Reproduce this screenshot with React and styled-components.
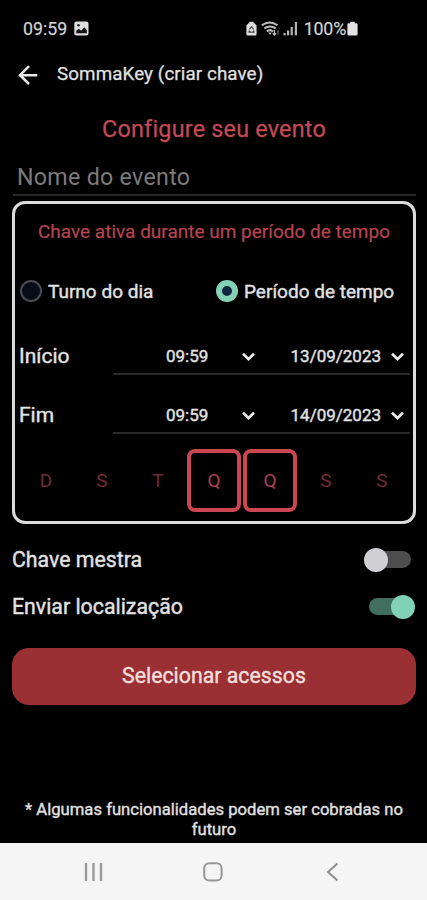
import React, { useState } from 'react'
import styled, { createGlobalStyle } from 'styled-components'

const GlobalStyle = createGlobalStyle`
    * {
        box-sizing: border-box;
    }

    body {
        margin: 0;
        background: #000;
        font-family: Roboto, 'Liberation Sans', sans-serif;
        color: #e2e2e2;
    }

    button, input {
        font-family: inherit;
        color: inherit;
        background: none;
        border: 0;
        padding: 0;
        margin: 0;
    }
`;

const Screen = styled.div`
    width: 427px;
    height: 900px;
    display: flex;
    flex-direction: column;
    background: #000;
    overflow: hidden;
`;

const StatusBar = styled.div`
    height: 50px;
    padding: 7px 69px 0 23px;
    display: flex;
    align-items: center;
    flex-shrink: 0;
    color: #d2d2d2;
    font-size: 17.8px;
    -webkit-text-stroke: 0.2px;

    svg {
        display: block;
        flex-shrink: 0;
    }
`;

const Clock = styled.span`
    margin-right: 7px;
`;

const StatusIcons = styled.div`
    margin-left: auto;
    display: flex;
    align-items: center;
`;

const Saver = styled.span`
    margin-right: 4px;
`;

const Wifi = styled.span`
    margin-right: 3px;
`;

const Battery = styled.span`
    margin: 0 1px 0 6px;
    letter-spacing: -0.2px;
`;

const Header = styled.header`
    height: 48px;
    padding-left: 18px;
    display: flex;
    align-items: center;
    flex-shrink: 0;
`;

const BackButton = styled.button`
    width: 39px;
    height: 24px;
    padding-top: 2px;
    display: flex;
    align-items: center;
`;

const HeaderTitle = styled.span`
    font-size: 18.8px;
    line-height: 24px;
    letter-spacing: 0.1px;
    -webkit-text-stroke: 0.25px;
`;

const Content = styled.main`
    flex: 1;
    padding: 0 11px 0 12px;
    display: flex;
    flex-direction: column;
`;

const Title = styled.h1`
    margin: 16px 0 0;
    height: 30px;
    line-height: 30px;
    font-size: 23.4px;
    font-weight: 400;
    letter-spacing: 0.2px;
    text-align: center;
    color: #c34a56;
    -webkit-text-stroke: 0.25px;
`;

const NameInput = styled.input`
    height: 39px;
    margin: 13px 0 5px 1px;
    padding: 2px 4px 0;
    border-bottom: 2px solid #262626;
    font-size: 23.2px;
    letter-spacing: 0.3px;
    outline: none;

    &::placeholder {
        color: #7b7b7b;
        opacity: 1;
    }
`;

const Card = styled.section`
    height: 323px;
    border: 3px solid #dcdcdc;
    border-radius: 13px;
    display: flex;
    flex-direction: column;
`;

const CardTitle = styled.h2`
    margin: 15px 0 0;
    height: 26px;
    line-height: 26px;
    font-size: 19px;
    font-weight: 400;
    text-align: center;
    color: #b84350;
    -webkit-text-stroke: 0.2px;
`;

const RadioGroup = styled.div`
    height: 28px;
    margin-top: 32px;
    padding-left: 5px;
    display: grid;
    grid-template-columns: 196px 1fr;
`;

const RadioLabel = styled.button`
    display: flex;
    align-items: center;
    gap: 6px;
    font-size: 19px;
    -webkit-text-stroke: 0.4px;
    white-space: nowrap;
`;

const RadioMark = styled.span`
    width: 22px;
    height: 22px;
    flex-shrink: 0;
    border-radius: 50%;
    background: ${({ $checked }) => ($checked ? '#12263f' : '#060c18')};
    border: ${({ $checked }) => ($checked ? '6.5px solid #83d2b5' : '2px solid #4a4a52')};
`;

const DateRows = styled.div`
    margin-top: 11px;
`;

const DateRow = styled.div`
    height: 59px;
    padding: 0 3px 0 4px;
    display: grid;
    grid-template-columns: 94px 1fr;
`;

const RowLabel = styled.span`
    font-size: 21px;
    -webkit-text-stroke: 0.4px;
    line-height: 24px;
    align-self: end;
    margin-bottom: 7px;
`;

const Pickers = styled.div`
    border-bottom: 2px solid #292929;
    padding: 0 6px 0 53px;
    display: flex;
    align-items: flex-end;
    justify-content: space-between;
`;

const Picker = styled.button`
    height: 34px;
    display: flex;
    align-items: center;
    gap: ${({ $gap }) => $gap};
    font-size: 17px;
    -webkit-text-stroke: 0.4px;
`;

const WeekDays = styled.div`
    margin: 15px 0 0 4px;
    display: grid;
    grid-template-columns: repeat(7, 56px);
    justify-content: start;
`;

const Day = styled.button`
    width: 54px;
    height: 63px;
    border: 4px solid ${({ $active }) => ($active ? '#cb4650' : 'transparent')};
    border-radius: 8px;
    font-size: 19px;
    color: ${({ $active }) => ($active ? '#ac4153' : '#702d38')};
`;

const Options = styled.div`
    padding-top: 12px;
`;

const OptionRow = styled.div`
    height: 47px;
    display: flex;
    align-items: center;
    justify-content: space-between;
    font-size: 21.3px;
    -webkit-text-stroke: 0.4px;
`;

const Track = styled.button`
    width: ${({ $on }) => ($on ? '45px' : '44px')};
    height: 17px;
    margin-right: ${({ $on }) => ($on ? '2px' : '5px')};
    border-radius: 9px;
    display: flex;
    align-items: center;
    justify-content: ${({ $on }) => ($on ? 'flex-end' : 'flex-start')};
    background: ${({ $on }) => ($on ? '#426e60' : '#4d4d4d')};
`;

const Thumb = styled.span`
    width: 24px;
    height: 24px;
    flex-shrink: 0;
    margin: 0 ${({ $on }) => ($on ? '-1px' : '-3px')};
    border-radius: 50%;
    background: ${({ $on }) => ($on ? '#80d1b5' : '#d0d0d4')};
`;

const SubmitButton = styled.button`
    height: 57px;
    margin-top: 18px;
    padding-bottom: 2px;
    flex-shrink: 0;
    border-radius: 17px;
    background: #9a2f34;
    color: #f3dfdc;
    font-size: 21.3px;
    -webkit-text-stroke: 0.4px;
`;

const Notice = styled.p`
    margin: auto 0 3px;
    padding: 0 6px;
    font-size: 16.65px;
    -webkit-text-stroke: 0.35px;
    line-height: 20px;
    text-align: center;
`;

const NavBar = styled.nav`
    height: 57px;
    flex-shrink: 0;
    padding: 0 88px 0 84px;
    display: flex;
    align-items: center;
    justify-content: space-between;
    background: #f5f5f5;

    svg {
        display: block;
    }
`;

const Chevron = () => (
    <svg width="13" height="9" viewBox="0 0 13 9" fill="none" stroke="#ececec" strokeWidth="2.7">
        <path d="M1 1.7 L6.5 7.1 L12 1.7" />
    </svg>
)

const ImageIcon = () => (
    <svg width="15" height="15" viewBox="0 0 15 15">
        <rect x="0.3" y="0.5" width="14.2" height="14" rx="2.2" fill="#dedede" />
        <path d="M2.3 12.2 V9.5 L5 7.8 L7.2 9.8 L10.3 6.3 L12.8 9 V12.2 Z" fill="#111" />
        <circle cx="4.5" cy="4.3" r="1.3" fill="#222" />
    </svg>
)

const SaverIcon = () => (
    <svg width="11" height="15" viewBox="0 0 11 15">
        <path d="M3.3 0.8 H7.7 V2.3 H8.5 L10.6 4.5 V13 Q10.6 14.5 9.2 14.5 H1.8 Q0.4 14.5 0.4 13 V4.5 L2.5 2.3 H3.3 Z" fill="#dedede" />
        <path d="M3.4 8.4 L5.5 5.6 L7.6 8.4 M3 11.2 H8" fill="none" stroke="#444" strokeWidth="1.1" />
        <path d="M2.2 11.7 L3 9 L5 10.8 Z M8.8 11.7 L8 9 L6.2 10.8 Z" fill="#444" />
    </svg>
)

const WifiIcon = () => (
    <svg width="19" height="15" viewBox="0 0 19 15" fill="none" stroke="#bdbdbd" strokeWidth="2">
        <path d="M0.8 4.3 Q8.6 -1.2 16.6 4.3" />
        <path d="M3.3 7.4 Q9 3.4 14.7 7.4" />
        <path d="M5.8 10.4 Q9 7.8 12 10.4" />
        <path d="M7.2 11.5 L9 13.9 L10.8 11.5 Z" fill="#bdbdbd" stroke="none" />
        <path d="M13.4 9 V14 M11.8 12.2 L13.4 14 L15 12.2" strokeWidth="1.3" />
        <path d="M17 13.5 V9" stroke="#777" strokeWidth="1.1" />
    </svg>
)

const SignalIcon = () => (
    <svg width="15" height="15" viewBox="0 0 15 15" fill="#b4b4b4">
        <rect x="0.5" y="12" width="2.2" height="2.3" />
        <rect x="4" y="9.5" width="2.2" height="4.8" />
        <rect x="7.6" y="6" width="2.2" height="8.3" />
        <rect x="11.8" y="1" width="2.2" height="13.3" />
    </svg>
)

const BatteryIcon = () => (
    <svg width="11" height="15" viewBox="0 0 11 15" fill="#e4e4e4">
        <path d="M3.2 0.8 H7.8 V2.3 H9.3 Q10.6 2.3 10.6 3.6 V13.1 Q10.6 14.4 9.3 14.4 H1.7 Q0.4 14.4 0.4 13.1 V3.6 Q0.4 2.3 1.7 2.3 H3.2 Z" />
    </svg>
)

const BackArrow = () => (
    <svg width="20" height="20" viewBox="0 0 20 20" fill="none" stroke="#e8e8e8" strokeWidth="2.5">
        <path d="M19.3 10.2 H2 M11 1.2 L2 10.2 L11 19" />
    </svg>
)

const days = ['D', 'S', 'T', 'Q', 'Q', 'S', 'S']

const periods = [
    { label: 'Início', time: '09:59', date: '13/09/2023' },
    { label: 'Fim', time: '09:59', date: '14/09/2023' },
]

const App = () => {

    const [mode, setMode] = useState('periodo');
    const [activeDays, setActiveDays] = useState([3, 4]);
    const [master, setMaster] = useState(false);
    const [location, setLocation] = useState(true);

    const toggleDay = (index) => {
        setActiveDays(activeDays.includes(index)
            ? activeDays.filter((d) => d !== index)
            : [...activeDays, index]);
    }

  return <>
    <GlobalStyle />
    <Screen>
        <StatusBar>
            <Clock>09:59</Clock>
            <ImageIcon />
            <StatusIcons>
                <Saver><SaverIcon /></Saver>
                <Wifi><WifiIcon /></Wifi>
                <SignalIcon />
                <Battery>100%</Battery>
                <BatteryIcon />
            </StatusIcons>
        </StatusBar>
        <Header>
            <BackButton aria-label="Voltar">
                <BackArrow />
            </BackButton>
            <HeaderTitle>SommaKey (criar chave)</HeaderTitle>
        </Header>
        <Content>
            <Title>Configure seu evento</Title>
            <NameInput placeholder="Nome do evento" />
            <Card>
                <CardTitle>Chave ativa durante um período de tempo</CardTitle>
                <RadioGroup>
                    <RadioLabel onClick={() => setMode('turno')}>
                        <RadioMark $checked={mode === 'turno'} />
                        Turno do dia
                    </RadioLabel>
                    <RadioLabel onClick={() => setMode('periodo')}>
                        <RadioMark $checked={mode === 'periodo'} />
                        Período de tempo
                    </RadioLabel>
                </RadioGroup>
                <DateRows>
                    {periods.map((item) => (
                        <DateRow key={item.label}>
                            <RowLabel>{item.label}</RowLabel>
                            <Pickers>
                                <Picker $gap="34px">{item.time}<Chevron /></Picker>
                                <Picker $gap="10px">{item.date}<Chevron /></Picker>
                            </Pickers>
                        </DateRow>
                    ))}
                </DateRows>
                <WeekDays>
                    {days.map((day, index) => (
                        <Day key={index} $active={activeDays.includes(index)} onClick={() => toggleDay(index)}>
                            {day}
                        </Day>
                    ))}
                </WeekDays>
            </Card>
            <Options>
                <OptionRow>
                    Chave mestra
                    <Track $on={master} onClick={() => setMaster(!master)}><Thumb $on={master} /></Track>
                </OptionRow>
                <OptionRow>
                    Enviar localização
                    <Track $on={location} onClick={() => setLocation(!location)}><Thumb $on={location} /></Track>
                </OptionRow>
            </Options>
            <SubmitButton>Selecionar acessos</SubmitButton>
            <Notice>* Algumas funcionalidades podem ser cobradas no futuro</Notice>
        </Content>
        <NavBar>
            <svg width="19" height="20" viewBox="0 0 19 20" fill="none" stroke="#9a9a9a" strokeWidth="2.4">
                <path d="M2 1 V19 M9.5 1 V19 M17 1 V19" />
            </svg>
            <svg width="23" height="20" viewBox="0 0 23 20" fill="none" stroke="#969696" strokeWidth="2">
                <rect x="1.2" y="1.2" width="17.4" height="17.4" rx="5" />
            </svg>
            <svg width="13" height="20" viewBox="0 0 13 20" fill="none" stroke="#8e8e8e" strokeWidth="2">
                <path d="M11.5 1.5 L2 10 L11.5 18.5" />
            </svg>
        </NavBar>
    </Screen>
  </>
}

export default App
